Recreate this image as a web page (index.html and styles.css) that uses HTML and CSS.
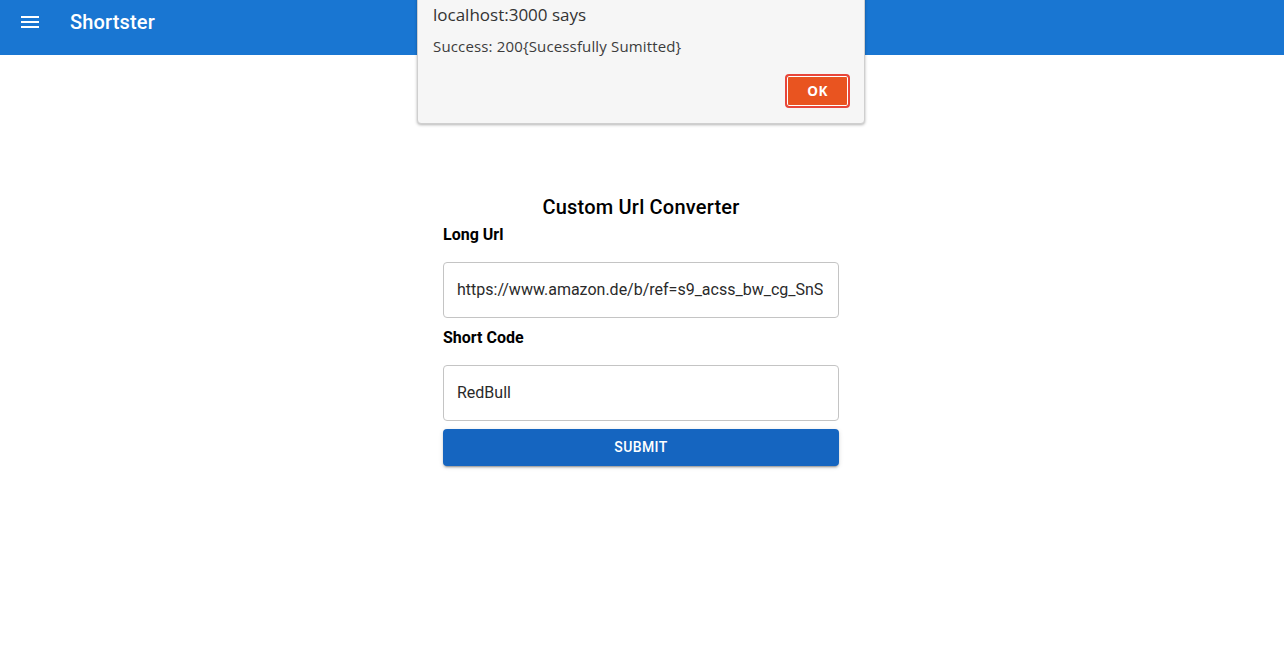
FILE: index.html
```html
<!DOCTYPE html>
<html>
<head>
<meta charset="utf-8">
<link rel="stylesheet" href="styles.css">
</head>
<body>
<header class="appbar">
  <button class="menu-btn" aria-label="menu">
    <svg width="24" height="24" viewBox="0 0 24 24"><path fill="#fff" d="M3 18h18v-2H3v2zm0-5h18v-2H3v2zm0-7v2h18V6H3z"/></svg>
  </button>
  <div class="brand">Shortster</div>
</header>
<main class="main">
  <form class="card">
    <h2 class="title">Custom Url Converter</h2>
    <label class="label">Long Url</label>
    <div class="field field-first"><span class="value">https://www.amazon.de/b/ref=s9_acss_bw_cg_SnS</span></div>
    <label class="label label-second">Short Code</label>
    <div class="field field-first"><span class="value">RedBull</span></div>
    <button type="button" class="submit">Submit</button>
  </form>
</main>
<div class="dialog">
  <div class="dlg-title">localhost:3000 says</div>
  <div class="dlg-msg">Success: 200{Sucessfully Sumitted}</div>
  <div class="dlg-actions"><button class="ok">OK</button></div>
</div>
</body>
</html>
```
FILE: styles.css
```css
html, body { margin: 0; padding: 0; }
body {
  background: #fff;
  font-family: Roboto, "Liberation Sans", sans-serif;
  width: 1284px;
  height: 654px;
  overflow: hidden;
  position: relative;
}
.appbar {
  height: 55px;
  background: #1976d2;
  display: flex;
  align-items: flex-start;
  padding: 10px 18px 0 18px;
  box-sizing: border-box;
}
.menu-btn {
  background: none;
  border: 0;
  padding: 0;
  width: 24px;
  height: 24px;
  margin-right: 28px;
  display: flex;
}
.brand {
  color: #fff;
  font-size: 20px;
  font-weight: 500;
  letter-spacing: 0.15px;
  line-height: 24px;
}
.main {
  display: flex;
  justify-content: center;
  padding-top: 136px;
}
.card {
  width: 396px;
  margin-left: -2px;
  display: flex;
  flex-direction: column;
}
.title {
  margin: 0;
  text-align: center;
  font-size: 20px;
  font-weight: 500;
  letter-spacing: 0.2px;
  line-height: 32px;
  color: #000;
}
.label {
  font-size: 16px;
  font-weight: 700;
  line-height: 24px;
  color: #000;
}
.label-second { margin-top: 1px; }
.field {
  margin-top: 16px;
  height: 56px;
  box-sizing: border-box;
  border: 1px solid #c4c4c4;
  border-radius: 4px;
  display: flex;
  align-items: center;
  padding: 0 13px;
  margin-bottom: 7px;
}
.field-first { margin-top: 15px; }
.value {
  font-size: 16px;
  color: #2a2a2a;
  line-height: 24px;
  white-space: nowrap;
  overflow: hidden;
  display: block;
  max-width: 100%;
}
.submit {
  margin-top: 1px;
  height: 37px;
  padding: 0 0 2px 0;
  border: 0;
  border-radius: 4px;
  background: #1565c0;
  color: #fff;
  font-family: Roboto, "Liberation Sans", sans-serif;
  font-size: 14px;
  font-weight: 500;
  letter-spacing: 0.4px;
  text-transform: uppercase;
  box-shadow: 0 3px 1px -2px rgba(0,0,0,0.2), 0 2px 2px 0 rgba(0,0,0,0.14), 0 1px 5px 0 rgba(0,0,0,0.12);
}
.dialog {
  position: absolute;
  left: 417px;
  top: -6px;
  width: 448px;
  height: 130px;
  box-sizing: border-box;
  background: #f6f6f6;
  border: 1px solid #cfcfcf;
  border-radius: 4px;
  box-shadow: 0 1px 3px rgba(0,0,0,0.3);
  padding: 9px 15px 0 15px;
  font-family: "Open Sans", "DejaVu Sans", sans-serif;
  color: #3c3c3c;
  display: flex;
  flex-direction: column;
}
.dlg-title {
  font-size: 17px;
  line-height: 22px;
  color: #333;
}
.dlg-msg {
  margin-top: 10px;
  font-size: 15px;
  letter-spacing: 0.15px;
  line-height: 20px;
  color: #3c3c3c;
}
.dlg-actions {
  display: flex;
  justify-content: flex-end;
  margin-top: 18px;
  margin-right: -1px;
}
.ok {
  width: 65px;
  height: 34px;
  background: #e95420;
  border: 2px solid #e8463a;
  border-radius: 4px;
  box-shadow: inset 0 0 0 1px #fff;
  color: #fff;
  font-family: "Open Sans", "DejaVu Sans", sans-serif;
  font-weight: 700;
  font-size: 13.5px;
  letter-spacing: 0.5px;
  padding: 0;
}
```
